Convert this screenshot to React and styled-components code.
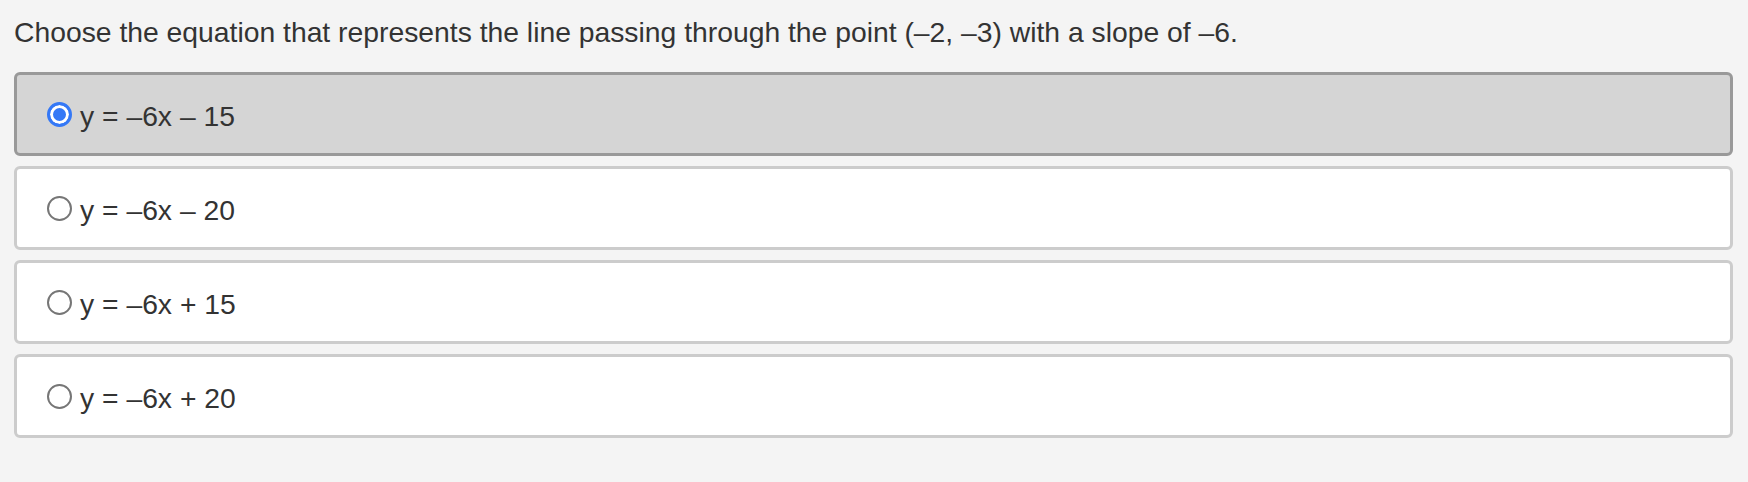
import React, { useState } from 'react';
import styled, { createGlobalStyle } from 'styled-components';

const GlobalStyle = createGlobalStyle`
  html, body {
    margin: 0;
    padding: 0;
    background: #f4f4f4;
  }
  body {
    font-family: 'Liberation Sans', Arial, Helvetica, sans-serif;
    color: #333;
  }
`;

const Styled = {
  Page: styled.div`
    display: flex;
    flex-direction: column;
    padding: 14px 15px 40px 14px;
  `,
  Question: styled.p`
    margin: 0;
    padding: 2px 0 0 0;
    height: 56px;
    box-sizing: border-box;
    font-size: 28.3px;
    line-height: 32px;
    color: #333;
  `,
  List: styled.div`
    display: flex;
    flex-direction: column;
    gap: 10px;
    margin-top: 2px;
  `,
  Option: styled.label`
    display: flex;
    align-items: center;
    gap: 8px;
    height: 84px;
    box-sizing: border-box;
    padding: 0 30px;
    border: 3px solid ${({ selected }) => (selected ? '#999' : '#ccc')};
    border-radius: 6px;
    background: ${({ selected }) => (selected ? '#d5d5d5' : '#fff')};
    cursor: pointer;
  `,
  Radio: styled.span`
    flex: none;
    width: 25px;
    height: 25px;
    box-sizing: border-box;
    border-radius: 50%;
    border: ${({ checked }) => (checked ? '3px solid #3478f6' : '2px solid #767676')};
    background: ${({ checked }) => (checked ? '#3478f6' : '#fff')};
    box-shadow: ${({ checked }) => (checked ? 'inset 0 0 0 3px #fff' : 'none')};
  `,
  Text: styled.span`
    padding-top: 4px;
    font-size: 28.3px;
    line-height: 32px;
    color: #333;
  `,
};

const options = [
  'y = –6x – 15',
  'y = –6x – 20',
  'y = –6x + 15',
  'y = –6x + 20',
];

function App() {
  const [picked, setPicked] = useState(0);
  return (
    <>
      <GlobalStyle />
      <Styled.Page>
        <Styled.Question>
          Choose the equation that represents the line passing through the point (–2, –3) with a slope of –6.
        </Styled.Question>
        <Styled.List>
          {options.map((opt, i) => (
            <Styled.Option key={opt} selected={picked === i} onClick={() => setPicked(i)}>
              <Styled.Radio checked={picked === i} />
              <Styled.Text>{opt}</Styled.Text>
            </Styled.Option>
          ))}
        </Styled.List>
      </Styled.Page>
    </>
  );
}

export default App;
